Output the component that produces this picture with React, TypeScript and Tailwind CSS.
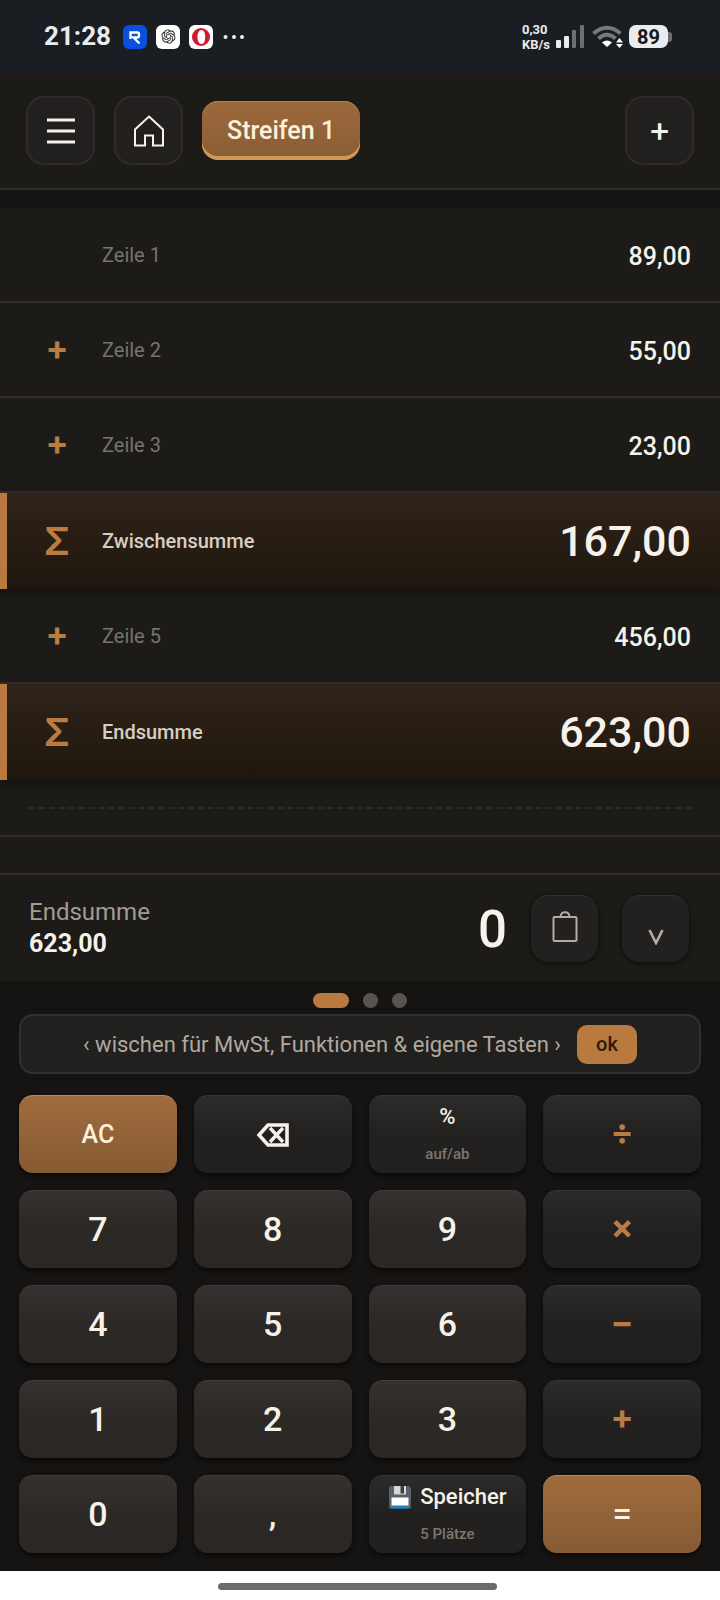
import type { ReactNode } from "react";
import { RiOpenaiFill } from "react-icons/ri";
import { cva } from "class-variance-authority";
import clsx from "clsx";

type Row = { op?: string; label: string; value: string; sum?: boolean };

const rows: Row[] = [
  { label: "Zeile 1", value: "89,00" },
  { op: "+", label: "Zeile 2", value: "55,00" },
  { op: "+", label: "Zeile 3", value: "23,00" },
  { op: "Σ", label: "Zwischensumme", value: "167,00", sum: true },
  { op: "+", label: "Zeile 5", value: "456,00" },
  { op: "Σ", label: "Endsumme", value: "623,00", sum: true },
];

type Key = {
  id: string;
  kind: "digit" | "fn" | "op" | "accent";
  label: ReactNode;
  size?: string;
  hint?: string;
};

const keys: Key[] = [
  { id: "Alles löschen", kind: "accent", label: "AC", size: "text-[25px]" },
  { id: "Löschen", kind: "fn", label: <BackspaceIcon /> },
  { id: "Prozent", kind: "fn", label: "%", hint: "auf/ab" },
  { id: "Geteilt", kind: "op", label: "÷" },
  { id: "7", kind: "digit", label: "7" },
  { id: "8", kind: "digit", label: "8" },
  { id: "9", kind: "digit", label: "9" },
  { id: "Mal", kind: "op", label: "×" },
  { id: "4", kind: "digit", label: "4" },
  { id: "5", kind: "digit", label: "5" },
  { id: "6", kind: "digit", label: "6" },
  { id: "Minus", kind: "op", label: "−" },
  { id: "1", kind: "digit", label: "1" },
  { id: "2", kind: "digit", label: "2" },
  { id: "3", kind: "digit", label: "3" },
  { id: "Plus", kind: "op", label: "+" },
  { id: "0", kind: "digit", label: "0" },
  { id: "Komma", kind: "digit", label: "," },
  {
    id: "Speicher",
    kind: "fn",
    label: (
      <>
        <FloppyIcon />
        Speicher
      </>
    ),
    hint: "5 Plätze",
  },
  { id: "Gleich", kind: "accent", label: "=", size: "pb-1.5 font-['Inter',sans-serif] text-[32px]" },
];

const keyStyle = cva(
  "flex h-[78px] flex-col items-center justify-center rounded-[14px] border-t shadow-[0_3px_5px_rgba(0,0,0,0.55)]",
  {
    variants: {
      kind: {
        digit:
          "border-[#413c3a] bg-linear-to-b from-[#353130] via-[#2c2826] to-[#2b2725] text-[34px] font-medium text-[#f7f2e9]",
        fn: "border-[#373635] bg-linear-to-b from-[#2c2b2a] via-[#222120] to-[#21201f] font-medium text-[#f7f2e9]",
        op: "border-[#373635] bg-linear-to-b from-[#2c2b2a] via-[#222120] to-[#21201f] pb-1.5 font-['Inter',sans-serif] text-[34px] font-bold text-[#b97c42]",
        accent: "border-[#b98b60] bg-linear-to-b from-[#a06c3d] to-[#865a32] font-medium text-[#fdf1dc]",
      },
    },
  }
);

const iconButton =
  "flex size-[69px] shrink-0 items-center justify-center rounded-[18px] border-2 border-[#2e2b2a] bg-[#22201e] text-[#f7f2e9]";

const footerButton =
  "flex size-[67px] shrink-0 items-center justify-center rounded-[18px] border-t border-[#343231] bg-[#232120] text-[#b3aca2] shadow-[0_1px_5px_rgba(0,0,0,0.7)]";

function BackspaceIcon() {
  return (
    <svg width="34" height="24" viewBox="0 0 34 24" fill="none" stroke="currentColor" aria-hidden="true">
      <path d="M12 2H31V22H12L3 12Z" strokeWidth="3.600" />
      <path d="M14 5L27 19M27 5L14 19" strokeWidth="3.400" />
    </svg>
  );
}

function FloppyIcon() {
  return (
    <svg width="24" height="24" viewBox="0 0 24 24" aria-hidden="true">
      <path d="M1 2.5Q1 1 2.5 1H21L23 3V22Q23 23.5 21.500 23.500H2.500Q1 23.500 1 22Z" fill="#58616a" />
      <path d="M6 1H18V9.500H6Z" fill="#d5d8da" />
      <path d="M12.500 1H16V8.500H12.500Z" fill="#3b4146" />
      <path d="M3.500 12.500H20.500V21H3.500Z" fill="#fff" />
      <path d="M3.500 20.500H20.500V23.500H3.500Z" fill="#1487c9" />
    </svg>
  );
}

function StatusBar() {
  return (
    <div className="flex h-[73px] items-center bg-[#1a1d22] pr-12 pl-11 text-[#e9ebee]">
      <span className="text-[26px] font-bold">21:28</span>

      {/* Notification icons */}
      <div className="ml-3 flex items-center gap-[9px]">
        <svg width="24" height="24" viewBox="0 0 24 24" aria-hidden="true">
          <rect width="24" height="24" rx="6" fill="#0a4fdd" />
          <path
            d="M7.500 14V7.500H14.500Q16 7.500 16 9V10.500Q16 12.500 14 12.500H10.500L16.500 18.500"
            fill="none"
            stroke="#fff"
            strokeWidth="2.400"
          />
        </svg>
        <span className="flex size-6 items-center justify-center rounded-md bg-white text-[#222]">
          <RiOpenaiFill className="size-[17px]" />
        </span>
        <svg width="24" height="24" viewBox="0 0 24 24" aria-hidden="true">
          <rect width="24" height="24" rx="6" fill="#fff" />
          <path
            fillRule="evenodd"
            d="M12 3A9 9 0 1 0 12 21A9 9 0 1 0 12 3ZM12.500 5C15 5 16.200 8 16.200 12S15 19 12.500 19S8.500 16 8.500 12S10 5 12.500 5Z"
            fill="#d3192c"
          />
        </svg>
        <svg width="24" height="6" viewBox="0 0 24 6" fill="currentColor" aria-hidden="true">
          <circle cx="3.500" cy="3" r="2" />
          <circle cx="12" cy="3" r="2" />
          <circle cx="20" cy="3" r="2" />
        </svg>
      </div>

      <div className="ml-auto flex items-center">
        <div className="text-[13px] leading-[15px] font-bold">
          <div>0,30</div>
          <div>KB/s</div>
        </div>
        <svg className="ml-1.5" width="28" height="23" viewBox="0 0 28 23" fill="currentColor" aria-hidden="true">
          <rect x="0" y="15" width="5" height="8" rx="1" />
          <rect x="8" y="11" width="5" height="12" rx="1" />
          <rect x="16" y="5" width="4" height="18" rx="1" opacity="0.400" />
          <rect x="24" y="0" width="4" height="23" rx="1" opacity="0.400" />
        </svg>
        <svg className="ml-2" width="31" height="23" viewBox="0 0 31 23" fill="none" aria-hidden="true">
          <path d="M1.500 8.500Q15 -3 28.500 8.500" stroke="#77797c" strokeWidth="4" />
          <path d="M6.500 13.500Q15 6 23.500 13.500" stroke="#77797c" strokeWidth="4" />
          <path d="M10 17.500Q15 13.500 20 17.500L15 22Z" fill="#fff" />
          <path d="M24 17.500L27.500 13L31 17.500ZM24 19L27.500 23L31 19Z" fill="#fff" />
        </svg>
        <span className="ml-1.5 flex h-[23px] w-[39px] items-center justify-center rounded-[7px] bg-[#e9ebee] text-xl font-bold text-[#15171a]">
          89
        </span>
        <span className="h-2.5 w-1 rounded-r-[3px] bg-[#6b6d70]" />
      </div>
    </div>
  );
}

export default function App() {
  return (
    <div className="flex min-h-screen flex-col bg-[#161412] font-['Roboto','Noto_Sans',sans-serif] text-[#f7f2e9]">
      <StatusBar />

      {/* Toolbar */}
      <header className="flex items-center gap-[19px] border-b-2 border-[#32302e] bg-[#1d1b18] px-[26px] pt-[23px] pb-[23px]">
        <button className={iconButton} aria-label="Menü">
          <svg width="28" height="26" viewBox="0 0 28 26" stroke="currentColor" strokeWidth="3.200" aria-hidden="true">
            <path d="M0 2H28M0 13H28M0 24H28" />
          </svg>
        </button>
        <button className={iconButton} aria-label="Start">
          <svg width="32" height="32" viewBox="0 0 32 32" fill="none" stroke="currentColor" strokeWidth="2" aria-hidden="true">
            <path d="M16 1.500L30 14.500V30.500H20V20.500H12V30.500H2V14.500Z" />
          </svg>
        </button>
        <button className="h-[59px] rounded-2xl bg-linear-to-b from-[#9d693b] to-[#8a5d36] px-[25px] text-[25px] font-medium text-[#fdf1dc] shadow-[inset_0_-4px_0_#cf9858,inset_0_1px_0_#ad8159]">
          Streifen 1
        </button>
        <button
          className={clsx(iconButton, "ml-auto pb-1 font-['Inter',sans-serif] text-[34px] font-medium")}
          aria-label="Neuer Streifen"
        >
          +
        </button>
      </header>

      {/* Paper strip */}
      <main className="mt-[18px] bg-[#1d1b18]">
        <ul>
          {rows.map((row) => (
            <li
              key={row.label}
              className={clsx(
                "flex items-center pr-[29px]",
                row.sum
                  ? "relative h-24 border-l-[7px] border-[#b97a40] bg-linear-to-b from-[#30231a] to-[#1e170d] pl-[29px] shadow-[0_4px_8px_rgba(0,0,0,0.35)]"
                  : "h-[95px] border-b-2 border-[#302d2b] pl-9"
              )}
            >
              <span
                className={clsx(
                  "w-[42px] text-center font-['Inter',sans-serif] text-[#b97c42]",
                  row.sum ? "text-[38px] font-semibold" : "pb-1 text-[34px] font-bold"
                )}
              >
                {row.op}
              </span>
              <span
                className={clsx(
                  "ml-6 flex-1 text-xl",
                  row.sum ? "font-medium text-[#d8cfc3]" : "text-[#79736b]"
                )}
              >
                {row.label}
              </span>
              <span className={clsx("font-medium", row.sum ? "text-[43px]" : "pt-1 text-[25px]")}>{row.value}</span>
            </li>
          ))}
        </ul>
        <div className="h-[57px] border-b-2 border-[#302d2b] px-[29px] pt-[27px]">
          <div className="border-t-2 border-dashed border-[#2f2b29]" />
        </div>
        <div className="h-9" />
      </main>

      {/* Current entry */}
      <section className="flex h-[108px] items-center border-t-2 border-[#302d2b] bg-[#1d1b18] pr-[31px] pl-[29px]">
        <div>
          <div className="text-2xl leading-[31px] text-[#a39c92]">Endsumme</div>
          <div className="text-[25px] leading-[31px] font-bold">623,00</div>
        </div>
        <output className="ml-auto pt-1 text-[51px] font-medium">0</output>
        <button className={clsx(footerButton, "ml-6 pb-1.5")} aria-label="Kopieren">
          <svg width="26" height="32" viewBox="0 0 26 32" fill="none" stroke="currentColor" strokeWidth="2" aria-hidden="true">
            <rect x="1.500" y="7" width="23" height="24" rx="1" />
            <path d="M8.500 7C8.500 .500 17.500 .500 17.500 7" />
          </svg>
        </button>
        <button className={clsx(footerButton, "ml-6 pt-4")} aria-label="Tastatur einklappen">
          <svg width="16" height="16" viewBox="0 0 16 16" fill="none" stroke="currentColor" strokeWidth="2.600" aria-hidden="true">
            <path d="M1.500 1L8 14L14.500 1" />
          </svg>
        </button>
      </section>

      {/* Keypad */}
      <section className="flex-1 px-[19px] pt-3 pb-[18px]">
        <div className="flex justify-center gap-3.5">
          <span className="h-[15px] w-9 rounded-full bg-[#b97a40]" />
          <span className="size-[15px] rounded-full bg-[#59544d]" />
          <span className="size-[15px] rounded-full bg-[#59544d]" />
        </div>

        <div className="mt-1.5 flex h-[60px] items-center justify-center gap-4 rounded-[14px] border-2 border-[#32302e] bg-[#22201f]">
          <p className="text-[22px] text-[#b0a99f]">‹ wischen für MwSt, Funktionen &amp; eigene Tasten ›</p>
          <button className="h-[39px] w-[60px] rounded-[10px] bg-[#b97a40] text-xl font-medium text-[#2f190b]">ok</button>
        </div>

        <div className="mt-[21px] grid grid-cols-4 gap-[17px]">
          {keys.map((key) => (
            <button key={key.id} aria-label={key.id} className={clsx(keyStyle({ kind: key.kind }), key.size)}>
              {key.hint ? (
                <>
                  <span className="flex items-center gap-2 text-[22px] leading-[30px]">{key.label}</span>
                  <span className="mt-2 text-[15px] leading-7 text-[#7d776f]">{key.hint}</span>
                </>
              ) : (
                key.label
              )}
            </button>
          ))}
        </div>
      </section>

      {/* System gesture bar */}
      <footer className="flex h-[29px] justify-center bg-white pt-3 pr-1.5">
        <div className="h-[7px] w-[279px] rounded-full bg-[#6b6b6b]" />
      </footer>
    </div>
  );
}
